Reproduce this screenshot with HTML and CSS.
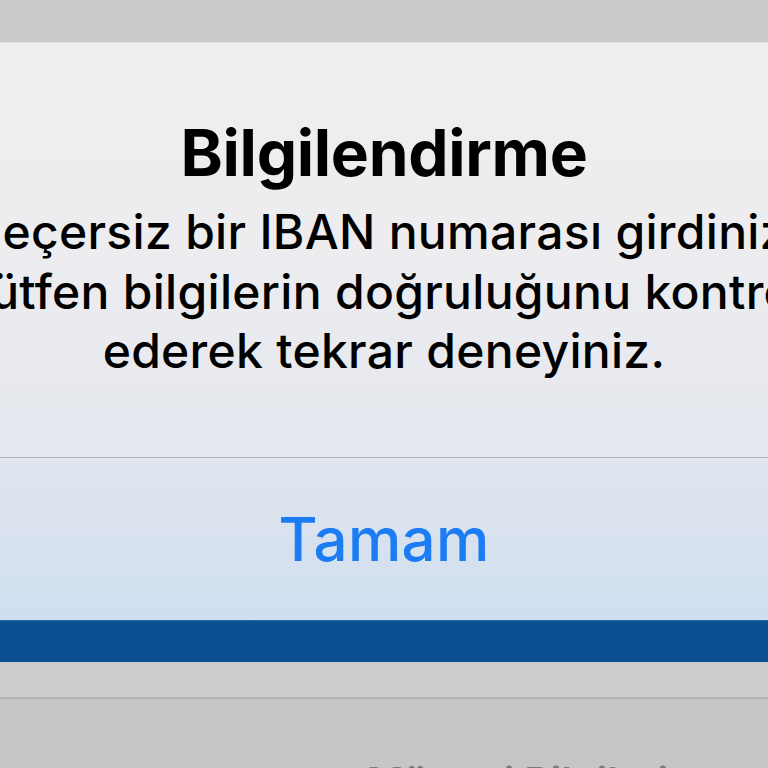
FILE: index.html
```html
<!DOCTYPE html>
<html lang="tr">
<head>
<meta charset="utf-8">
<title>Bilgilendirme</title>
<link rel="stylesheet" href="styles.css">
</head>
<body>
<div class="screen">
  <div class="topbar"></div>
  <div class="alert-body">
    <div class="alert-title">Bilgilendirme</div>
    <div class="alert-msg">
      <span class="line">Geçersiz bir IBAN numarası girdiniz.</span>
      <span class="line">Lütfen bilgilerin doğruluğunu kontrol</span>
      <span class="line">ederek tekrar deneyiniz.</span>
    </div>
  </div>
  <div class="alert-btn"><span class="btn-label">Tamam</span></div>
  <div class="navbar"></div>
  <div class="strip"></div>
  <div class="below"><span class="below-text">Müşteri Bilgileri</span></div>
</div>
</body>
</html>
```
FILE: styles.css
```css
html, body {
  margin: 0;
  padding: 0;
  width: 768px;
  height: 768px;
  overflow: hidden;
  background: #c6c6c6;
  font-family: "Inter", "Noto Sans", sans-serif;
}
.screen {
  width: 768px;
  height: 768px;
  display: flex;
  flex-direction: column;
  overflow: hidden;
}
.topbar {
  height: 43px;
  flex: none;
  background: #cbcbcc;
  border-bottom: 1px solid #e2e2e6;
  box-sizing: border-box;
}
.alert-body {
  height: 414px;
  flex: none;
  background: linear-gradient(#eeeef0 0%, #ededf0 50%, #e4e7ee 100%);
  display: flex;
  flex-direction: column;
  align-items: center;
  box-sizing: border-box;
  padding-top: 74px;
}
.alert-title {
  font-size: 64px;
  font-weight: 700;
  line-height: 72px;
  color: #000;
  white-space: nowrap;
  letter-spacing: -0.3px;
}
.alert-msg {
  display: flex;
  flex-direction: column;
  align-items: center;
  margin-top: 13px;
}
.line {
  font-size: 48px;
  font-weight: 500;
  line-height: 59.5px;
  color: #000;
  white-space: nowrap;
  letter-spacing: 0.3px;
}
.alert-btn {
  height: 163px;
  flex: none;
  border-top: 1.5px solid #aeb2ba;
  box-sizing: border-box;
  background: linear-gradient(#e0e5ee 0%, #d8e2ee 50%, #cedff0 100%);
  display: flex;
  align-items: center;
  justify-content: center;
}
.btn-label {
  font-size: 60px;
  font-weight: 500;
  color: #1b7cf4;
  letter-spacing: 0.3px;
}
.navbar {
  height: 42px;
  flex: none;
  background: #0c5094;
  border-top: 1px solid #2e6aa6;
  border-bottom: 2px solid #0a4f9a;
  box-sizing: border-box;
}
.strip {
  height: 37px;
  flex: none;
  background: #cccccc;
  border-bottom: 2px solid #b2b2b2;
  box-sizing: border-box;
}
.below {
  flex: 1;
  background: #c6c6c6;
  display: flex;
  justify-content: flex-end;
  padding-top: 59px;
  padding-right: 100px;
}
.below-text {
  font-size: 40px;
  font-weight: 600;
  color: #7a7a7a;
  white-space: nowrap;
  line-height: 48px;
}
```
